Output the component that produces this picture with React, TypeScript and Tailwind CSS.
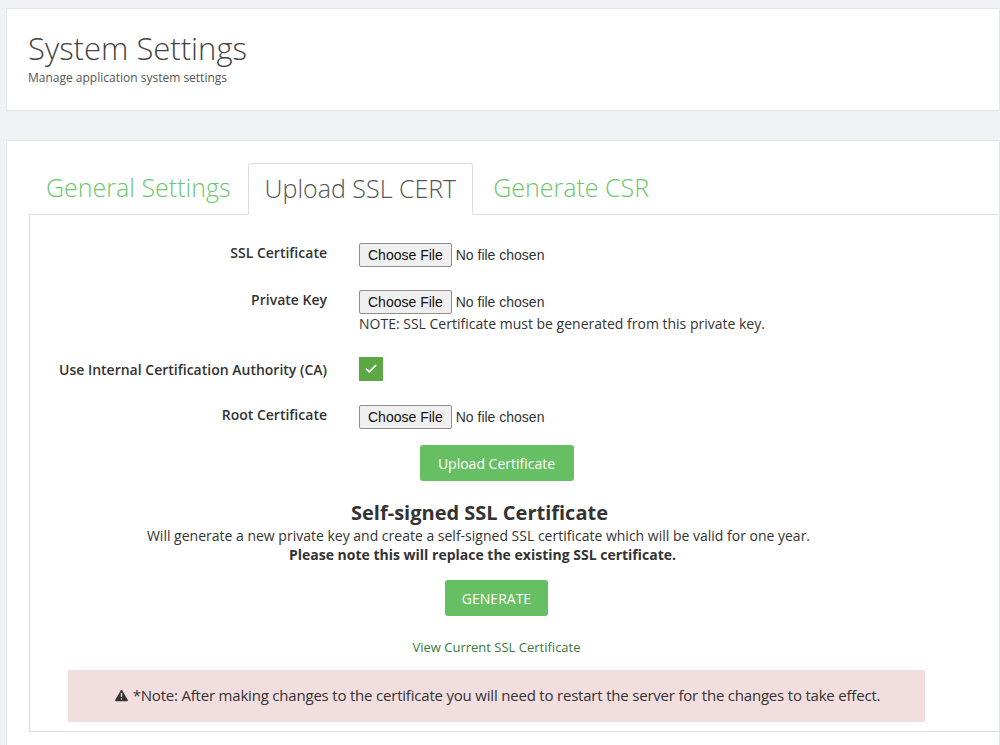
import { Check, TriangleAlert } from 'lucide-react';

const font = { fontFamily: '"Open Sans", sans-serif' };

const FileRow = ({ label, note }: { label: string; note?: string }) => (
  <div className="flex items-start">
    <div className="w-[297px] text-right text-[14px] font-semibold text-[#333] leading-[20px]">{label}</div>
    <div className="ml-[32px] flex flex-col">
      <input
        type="file"
        className="text-[14px] text-[#333] h-[24px] file:h-[24px] file:px-[8px] file:mr-[4px] file:border file:border-[#8f8f8f] file:bg-[#efefef] file:rounded-[2px] file:text-[#111]"
        style={{ fontFamily: '"Liberation Sans", Arial, sans-serif' }}
      />
      {note && <div className="text-[14px] text-[#333] leading-[20px]">{note}</div>}
    </div>
  </div>
);

export default function App() {
  return (
    <div className="min-h-[745px] bg-[#f0f1f5] pt-[8px] pl-[6px]" style={font}>
      <div className="bg-white border border-[#e4e6ea] h-[103px] pl-[21px] pt-[20px]">
        <h1 className="text-[31px] font-light text-[#444] leading-[38px]">System Settings</h1>
        <p className="text-[12px] text-[#555] mt-[2px]">Manage application system settings</p>
      </div>
      <div className="mt-[29px] bg-white border border-[#e4e6ea] pt-[21px] pl-[22px] pb-[14px]">
        <div className="flex items-end h-[52px]">
          <div className="px-[17px] h-[52px] flex items-center text-[25px] font-light text-[#6cc66c]">General Settings</div>
          <div className="px-[16px] h-[52px] flex items-center text-[25px] font-light text-[#555] border border-[#ddd] border-b-white rounded-t-[3px] bg-white relative top-[1px]">Upload SSL CERT</div>
          <div className="px-[20px] h-[52px] flex items-center text-[25px] font-light text-[#6cc66c]">Generate CSR</div>
        </div>
        <div className="border border-[#ddd] border-r-0 h-[518px]">
          <div className="w-[933px] pt-[28px] flex flex-col">
            <FileRow label="SSL Certificate" />
            <div className="h-[23px]" />
            <FileRow label="Private Key" note="NOTE: SSL Certificate must be generated from this private key." />
            <div className="h-[23px]" />
            <div className="flex items-center">
              <div className="w-[297px] text-right text-[14px] font-semibold text-[#333]">Use Internal Certification Authority (CA)</div>
              <div className="ml-[32px] w-[24px] h-[24px] bg-[#5da845] flex items-center justify-center">
                <Check className="w-[14px] h-[14px] text-white" strokeWidth={3} />
              </div>
            </div>
            <div className="h-[24px]" />
            <FileRow label="Root Certificate" />
            <div className="flex justify-center mt-[16px]">
              <button className="bg-[#67bf64] text-white text-[14px] rounded-[3px] w-[154px] h-[36px]">Upload Certificate</button>
            </div>
            <h2 className="text-center text-[20px] font-bold text-[#333] mt-[19px] leading-[26px] pr-[34px]">Self-signed SSL Certificate</h2>
            <p className="text-center text-[14px] text-[#333] leading-[20px] pr-[36px]">Will generate a new private key and create a self-signed SSL certificate which will be valid for one year.</p>
            <p className="text-center text-[14px] font-bold text-[#333] leading-[18px] pr-[28px]">Please note this will replace the existing SSL certificate.</p>
            <div className="flex justify-center mt-[16px]">
              <button className="bg-[#67bf64] text-white text-[14px] rounded-[3px] w-[103px] h-[36px]">GENERATE</button>
            </div>
            <div className="text-center text-[13px] text-[#3c7a3a] mt-[22px]">View Current SSL Certificate</div>
            <div className="mx-[38px] mt-[12px] h-[52px] bg-[#f2dede] flex items-center justify-center text-[15px] text-[#333] tracking-[-0.2px]">
              <TriangleAlert className="w-[17px] h-[17px] mr-[3px] fill-[#333] text-[#f2dede]" strokeWidth={2} />
              *Note: After making changes to the certificate you will need to restart the server for the changes to take effect.
            </div>
          </div>
        </div>
      </div>
    </div>
  );
}
